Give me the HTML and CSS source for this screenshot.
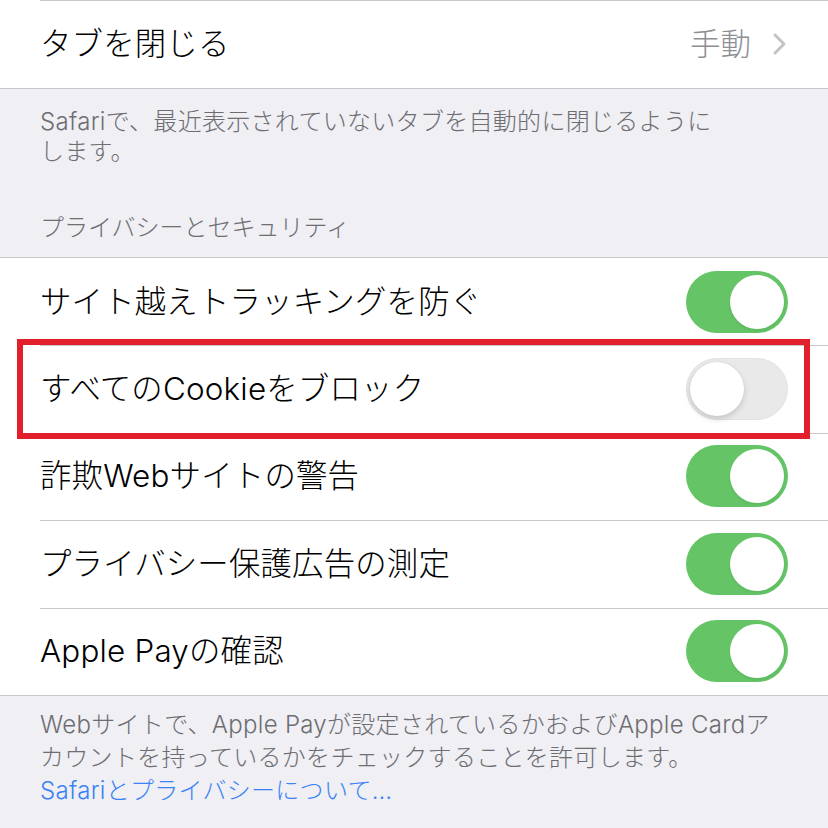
FILE: index.html
```html
<!DOCTYPE html>
<html lang="ja">
<head>
<meta charset="utf-8">
<title>Safari 設定</title>
<link rel="stylesheet" href="styles.css">
</head>
<body>
<div class="screen">
  <div class="group group-first">
    <div class="row">
      <span class="label">タブを閉じる</span>
      <span class="detail">
        <span class="value">手動</span>
        <svg class="chevron" width="16" height="24" viewBox="0 0 16 24" aria-hidden="true">
          <path d="M4 3 L13 12 L4 21" fill="none" stroke="#c4c4c7" stroke-width="3" stroke-linecap="round" stroke-linejoin="round"/>
        </svg>
      </span>
    </div>
  </div>

  <p class="note note-top">Safariで、最近表示されていないタブを自動的に閉じるように<br>します。</p>
  <h2 class="section-header">プライバシーとセキュリティ</h2>

  <div class="group">
    <div class="row"><span class="label">サイト越えトラッキングを防ぐ</span><span class="switch on"><span class="knob"></span></span></div>
    <div class="row"><span class="label">すべてのCookieをブロック</span><span class="switch off"><span class="knob"></span></span></div>
    <div class="row"><span class="label">詐欺Webサイトの警告</span><span class="switch on"><span class="knob"></span></span></div>
    <div class="row"><span class="label">プライバシー保護広告の測定</span><span class="switch on"><span class="knob"></span></span></div>
    <div class="row"><span class="label">Apple Payの確認</span><span class="switch on"><span class="knob"></span></span></div>
  </div>

  <p class="note note-bottom">Webサイトで、Apple Payが設定されているかおよびApple Cardア<br>カウントを持っているかをチェックすることを許可します。<br><a class="link" href="#">Safariとプライバシーについて…</a></p>

  <div class="highlight"></div>
</div>
</body>
</html>
```

FILE: styles.css
```css
html, body {
  margin: 0;
  padding: 0;
}

body {
  background: #efeff4;
  font-family: Inter, "Noto Sans CJK JP", sans-serif;
  font-weight: 300;
  color: #000;
}

.screen {
  position: relative;
  width: 828px;
  height: 828px;
  overflow: hidden;
  background: #efeff4;
}

.group {
  background: #fff;
  border-top: 1px solid #c8c7cc;
  border-bottom: 1px solid #c8c7cc;
}

.group-first {
  border-top: none;
  position: relative;
}

.group-first::before {
  content: "";
  position: absolute;
  left: 40px;
  right: 0;
  top: 0;
  height: 1px;
  background: #c8c7cc;
}

.group-first .row {
  height: 88px;
}

.row {
  position: relative;
  display: flex;
  align-items: center;
  justify-content: space-between;
  height: 87.4px;
  padding: 0 40px 0 40px;
  box-sizing: border-box;
}

.group .row + .row::before {
  content: "";
  position: absolute;
  left: 40px;
  right: 0;
  top: 0;
  height: 1px;
  background: #c8c7cc;
}

.label {
  font-size: 31.4px;
  line-height: 40px;
  letter-spacing: 0.2px;
  white-space: nowrap;
}

.detail {
  display: flex;
  align-items: center;
  gap: 20px;
  margin-right: 1px;
}

.value {
  font-size: 30.5px;
  line-height: 40px;
  color: #8e8e93;
}

.chevron {
  display: block;
}

.note {
  margin: 0;
  padding: 0 40px;
  font-size: 24px;
  letter-spacing: 0.3px;
  color: #6d6d72;
}

.note-top {
  line-height: 30px;
  padding-top: 18px;
}

.section-header {
  margin: 0;
  padding: 46px 40px 14px;
  font-size: 24px;
  line-height: 30px;
  font-weight: 300;
  color: #6d6d72;
}

.note-bottom {
  line-height: 33px;
  padding-top: 12px;
}

.link {
  color: #3a82f6;
  text-decoration: none;
}

.switch {
  position: relative;
  flex: none;
  width: 102px;
  height: 62px;
  border-radius: 31px;
  box-sizing: border-box;
}

.switch.on {
  background: #64c466;
}

.switch.off {
  background: #e9e9ea;
  border: 1.5px solid #e3e3e5;
}

.knob {
  position: absolute;
  top: 4px;
  width: 54px;
  height: 54px;
  border-radius: 50%;
  background: #fff;
}

.switch.on .knob {
  right: 4px;
  box-shadow: 0 2px 3px rgba(0, 0, 0, 0.06);
}

.switch.off .knob {
  left: 2.5px;
  top: 2.5px;
  box-shadow: 0 3px 6px rgba(0, 0, 0, 0.15), 0 0 1px rgba(0, 0, 0, 0.12);
}

.highlight {
  position: absolute;
  left: 17px;
  top: 339px;
  width: 793px;
  height: 100px;
  border: 6px solid #e2202c;
  box-sizing: border-box;
  pointer-events: none;
}
```
